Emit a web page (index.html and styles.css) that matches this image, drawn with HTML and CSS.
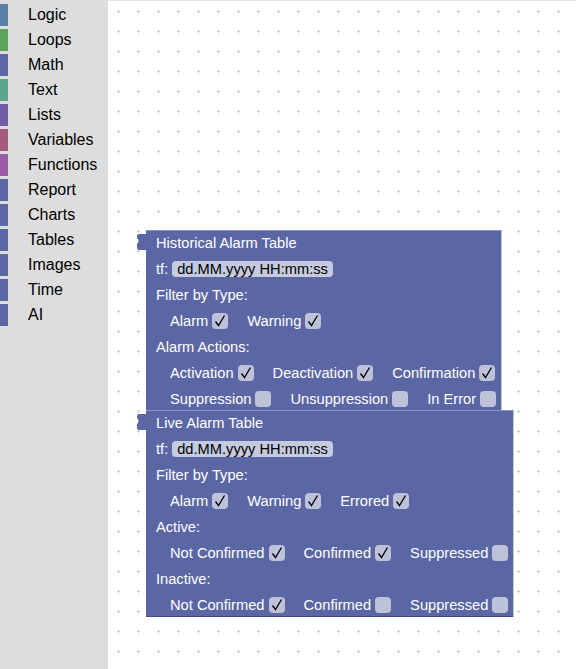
FILE: index.html
```html
<!DOCTYPE html>
<html lang="en">
<head>
    <meta charset="UTF-8">
    <meta name="viewport" content="width=device-width, initial-scale=1.0">
    <title>Alarm Blocks</title>
    <link rel="stylesheet" href="styles.css">
</head>
<body>

    <!-- Toolbox -->
    <div class="toolbox">
        <div class="category"><span class="strip logic"></span>Logic</div>
        <div class="category"><span class="strip loops"></span>Loops</div>
        <div class="category"><span class="strip math"></span>Math</div>
        <div class="category"><span class="strip text"></span>Text</div>
        <div class="category"><span class="strip lists"></span>Lists</div>
        <div class="category"><span class="strip variables"></span>Variables</div>
        <div class="category"><span class="strip functions"></span>Functions</div>
        <div class="category"><span class="strip custom"></span>Report</div>
        <div class="category"><span class="strip custom"></span>Charts</div>
        <div class="category"><span class="strip custom"></span>Tables</div>
        <div class="category"><span class="strip custom"></span>Images</div>
        <div class="category"><span class="strip custom"></span>Time</div>
        <div class="category"><span class="strip custom"></span>AI</div>
    </div>

    <!-- Workspace -->
    <div class="workspace">
        <svg class="grid" width="100%" height="100%">
            <defs>
                <pattern id="dots" width="20" height="20" patternUnits="userSpaceOnUse" x="0" y="0">
                    <rect x="9" y="10" width="3" height="1" fill="#ccc"/>
                    <rect x="10" y="9" width="1" height="3" fill="#ccc"/>
                </pattern>
                <symbol id="tick" viewBox="0 0 16 16">
                    <path d="M3.5 8.5 L6.5 12.5 L12.5 2.5" fill="none" stroke="#000" stroke-width="1.3"/>
                </symbol>
            </defs>
            <rect width="100%" height="100%" fill="url(#dots)"/>
        </svg>

        <div class="stack">
            <!-- Historical Alarm Table -->
            <div class="block historical">
                <svg class="tab" width="10" height="16" viewBox="0 0 10 16">
                    <path d="M9 0 H2 Q0 0 0 2 V4 Q3 7 0 10 V14 Q0 16 2 16 H9 Z" fill="#5b67a5"/>
                </svg>
                <div class="row">Historical Alarm Table</div>
                <div class="row">tf:<span class="field">dd.MM.yyyy HH:mm:ss</span></div>
                <div class="row">Filter by Type:</div>
                <div class="row indent">
                    <span class="opt">Alarm<span class="check"><svg width="16" height="16"><use href="#tick"/></svg></span></span>
                    <span class="opt">Warning<span class="check"><svg width="16" height="16"><use href="#tick"/></svg></span></span>
                </div>
                <div class="row">Alarm Actions:</div>
                <div class="row indent">
                    <span class="opt">Activation<span class="check"><svg width="16" height="16"><use href="#tick"/></svg></span></span>
                    <span class="opt">Deactivation<span class="check"><svg width="16" height="16"><use href="#tick"/></svg></span></span>
                    <span class="opt">Confirmation<span class="check"><svg width="16" height="16"><use href="#tick"/></svg></span></span>
                </div>
                <div class="row indent">
                    <span class="opt">Suppression<span class="check"></span></span>
                    <span class="opt">Unsuppression<span class="check"></span></span>
                    <span class="opt">In Error<span class="check"></span></span>
                </div>
            </div>

            <!-- Live Alarm Table -->
            <div class="block live">
                <svg class="tab" width="10" height="16" viewBox="0 0 10 16">
                    <path d="M9 0 H2 Q0 0 0 2 V4 Q3 7 0 10 V14 Q0 16 2 16 H9 Z" fill="#5b67a5"/>
                </svg>
                <div class="row">Live Alarm Table</div>
                <div class="row">tf:<span class="field">dd.MM.yyyy HH:mm:ss</span></div>
                <div class="row">Filter by Type:</div>
                <div class="row indent">
                    <span class="opt">Alarm<span class="check"><svg width="16" height="16"><use href="#tick"/></svg></span></span>
                    <span class="opt">Warning<span class="check"><svg width="16" height="16"><use href="#tick"/></svg></span></span>
                    <span class="opt">Errored<span class="check"><svg width="16" height="16"><use href="#tick"/></svg></span></span>
                </div>
                <div class="row">Active:</div>
                <div class="row indent">
                    <span class="opt">Not Confirmed<span class="check"><svg width="16" height="16"><use href="#tick"/></svg></span></span>
                    <span class="opt">Confirmed<span class="check"><svg width="16" height="16"><use href="#tick"/></svg></span></span>
                    <span class="opt">Suppressed<span class="check"></span></span>
                </div>
                <div class="row">Inactive:</div>
                <div class="row indent">
                    <span class="opt">Not Confirmed<span class="check"><svg width="16" height="16"><use href="#tick"/></svg></span></span>
                    <span class="opt">Confirmed<span class="check"></span></span>
                    <span class="opt">Suppressed<span class="check"></span></span>
                </div>
            </div>
        </div>
    </div>

</body>
</html>
```

FILE: styles.css
```css
body {
    margin: 0;
    padding: 0;
    display: flex;
    height: 669px;
    overflow: hidden;
    font-family: 'Liberation Sans', Arial, sans-serif;
    background-color: #fff;
}

/* Toolbox */
.toolbox {
    width: 108px;
    flex-shrink: 0;
    background-color: #ddd;
    padding-top: 4px;
}

.category {
    display: flex;
    align-items: center;
    height: 22px;
    margin-bottom: 3px;
    font-size: 16px;
    color: #000;
}

.strip {
    width: 8px;
    height: 22px;
    margin-right: 20px;
}

.logic { background-color: #5b80a5; }
.loops { background-color: #5ba55b; }
.math { background-color: #5b67a5; }
.text { background-color: #5ba58c; }
.lists { background-color: #745ba5; }
.variables { background-color: #a55b80; }
.functions { background-color: #995ba5; }
.custom { background-color: #5b67a5; }

/* Workspace */
.workspace {
    flex: 1;
    position: relative;
    border-top: 1px solid #e4e4e4;
    padding: 229px 0 0 38px;
}

.grid {
    position: absolute;
    top: 0;
    left: 0;
}

.stack {
    position: relative;
    display: flex;
    flex-direction: column;
    align-items: flex-start;
}

.block {
    position: relative;
    background-color: #5b67a5;
    color: #fff;
    font-size: 11pt;
    padding-left: 10px;
    box-sizing: border-box;
    box-shadow: inset 0 1px #8a92c3, inset -1px 0 #c3c7da;
}

.historical {
    width: 356px;
    height: 180px;
}

.live {
    width: 368px;
    height: 207px;
    box-shadow: inset 0 1px #8a92c3, inset -1px 0 #c3c7da, inset 0 -1px #3f4780;
}

.tab {
    position: absolute;
    left: -9px;
    top: 4px;
}

.row {
    display: flex;
    align-items: center;
    height: 26px;
    white-space: nowrap;
}

.indent {
    padding-left: 14px;
    gap: 19px;
}

.opt {
    display: flex;
    align-items: center;
}

.check {
    display: inline-flex;
    width: 16px;
    height: 16px;
    margin-left: 4px;
    border-radius: 4px;
    background-color: #bdc2d9;
}

.field {
    display: inline-flex;
    align-items: center;
    height: 16px;
    margin-left: 4px;
    padding: 0 5px;
    border-radius: 4px;
    background-color: #c5cadf;
    color: #000;
}
```
